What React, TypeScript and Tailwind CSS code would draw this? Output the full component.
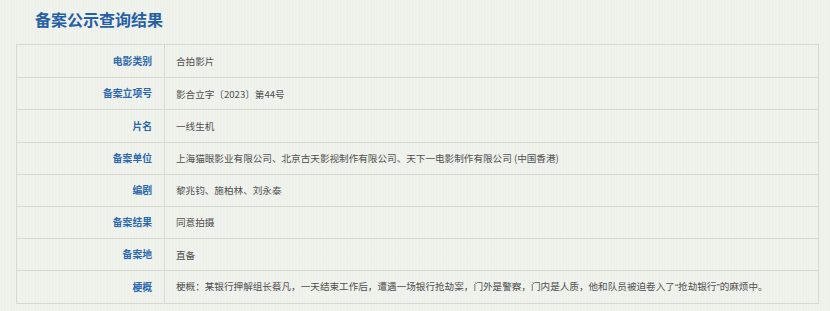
import React from "react";

const q = (s: string) => (
  <span style={{ fontFamily: '"Liberation Sans", sans-serif' }}>{s}</span>
);

const rows: { label: string; value: React.ReactNode }[] = [
  { label: "电影类别", value: "合拍影片" },
  { label: "备案立项号", value: "影合立字〔2023〕第44号" },
  { label: "片名", value: "一线生机" },
  {
    label: "备案单位",
    value:
      "上海猫眼影业有限公司、北京古天影视制作有限公司、天下一电影制作有限公司 (中国香港)",
  },
  { label: "编剧", value: "黎兆钧、施柏林、刘永泰" },
  { label: "备案结果", value: "同意拍摄" },
  { label: "备案地", value: "直备" },
  {
    label: "梗概",
    value: (
      <>
        梗概：某银行押解组长蔡凡，一天结束工作后，遭遇一场银行抢劫案，门外是警察，门内是人质，他和队员被迫卷入了
        {q("\u201c")}抢劫银行{q("\u201d")}的麻烦中。
      </>
    ),
  },
];

const App = () => {
  return (
    <div
      className="w-[830px] h-[311px] overflow-hidden bg-[#eef0ea] bg-[repeating-linear-gradient(90deg,rgba(255,255,255,0.18)_0px,rgba(255,255,255,0.18)_1px,transparent_1px,transparent_3px)]"
      style={{ fontFamily: '"Noto Sans CJK SC", "Noto Sans", sans-serif' }}
    >
      {/* Title */}
      <h1 className="pl-[35px] pt-[8px] h-[44px] text-[16px] leading-[22px] font-bold text-[#2560a6]">
        备案公示查询结果
      </h1>

      {/* Result table */}
      <div className="ml-[16px] w-[803px] border border-[#d6d8d1]">
        {rows.map((row, i) => (
          <div
            key={i}
            className={`flex h-[32.2px] ${i > 0 ? "border-t border-[#d6d8d1]" : ""}`}
          >
            <div className="w-[148px] shrink-0 flex items-center justify-end pr-[12px] border-r border-[#d6d8d1] text-[9.8px] font-bold text-[#2c68ad]">
              {row.label}
            </div>
            <div className="flex-1 flex items-center pl-[11px] text-[9.6px] text-[#505050]">
              <span>{row.value}</span>
            </div>
          </div>
        ))}
      </div>
    </div>
  );
};

export default App;
